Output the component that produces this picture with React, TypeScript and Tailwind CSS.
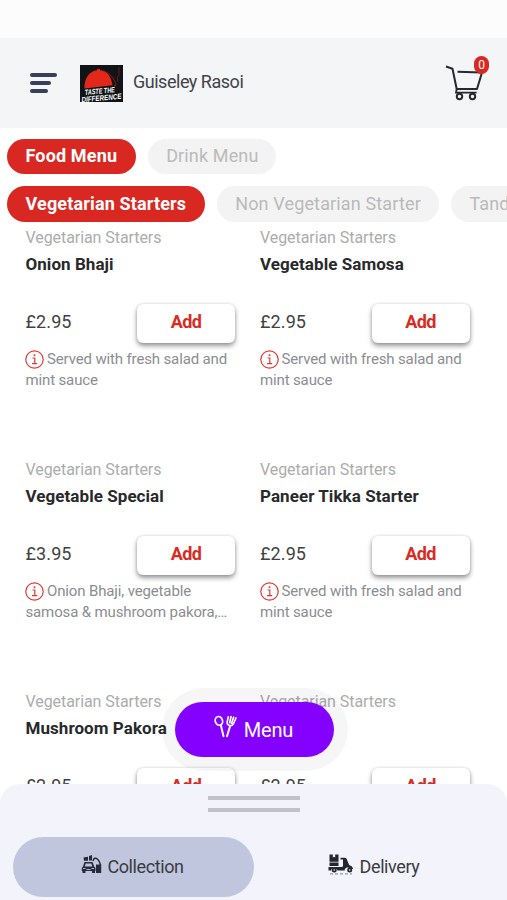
import type { ReactNode } from "react";

type MenuItem = {
  name: string;
  price: string;
  note: string;
};

const CATEGORY = "Vegetarian Starters";

const items: MenuItem[] = [
  { name: "Onion Bhaji", price: "£2.95", note: "Served with fresh salad and mint sauce" },
  { name: "Vegetable Samosa", price: "£2.95", note: "Served with fresh salad and mint sauce" },
  { name: "Vegetable Special", price: "£3.95", note: "Onion Bhaji, vegetable samosa & mushroom pakora,…" },
  { name: "Paneer Tikka Starter", price: "£2.95", note: "Served with fresh salad and mint sauce" },
  { name: "Mushroom Pakora", price: "£2.95", note: "" },
  { name: "", price: "£2.95", note: "" },
];

function RestaurantLogo() {
  return (
    <svg width="43" height="37" viewBox="0 0 43 37" className="ml-[23px] shrink-0">
      <rect width="43" height="37" fill="#111416" />
      <path d="M4.500 23.500C4 13 10 6 17 5.300c0-1.800 3-2 3.200 0C27 5.700 31.500 12 32.500 20.300Z" fill="#e3281a" />
      <path d="M23 6c7 2 12 8 13 14.500l-2 .3" fill="none" stroke="#a51e1c" strokeWidth="0.8" />
      <path d="M39 2v9M37.500 11v6" fill="none" stroke="#5c1519" strokeWidth="1.300" />
      <g
        fill="#fff"
        fontFamily="'Liberation Sans', Arial, sans-serif"
        fontWeight="700"
        fontStyle="italic"
        transform="rotate(-5 21 28)"
      >
        <text x="5" y="28.500" fontSize="7.500" textLength="30" lengthAdjust="spacingAndGlyphs">
          TASTE THE
        </text>
        <text x="1" y="35.500" fontSize="7.500" textLength="40" lengthAdjust="spacingAndGlyphs">
          DIFFERENCE
        </text>
      </g>
    </svg>
  );
}

function CartIcon() {
  return (
    <svg width="40" height="38" viewBox="0 0 40 38" fill="none" stroke="#26282d" strokeWidth="2">
      <path d="M1 2.500l6.500 2.300 4.200 20.200h20.300l5-16.500-24.500-.700" strokeLinejoin="round" />
      <path d="M11.700 25l-.7 3.700h20.500" strokeWidth="1.800" />
      <circle cx="14.500" cy="32.500" r="2.700" />
      <circle cx="27.500" cy="32.500" r="2.700" />
    </svg>
  );
}

function InfoIcon() {
  return (
    <svg
      width="19"
      height="19"
      viewBox="0 0 19 19"
      fill="none"
      stroke="#df3a35"
      className="-ml-[0.5px] mr-[3px] inline-block align-[-5px]"
    >
      <circle cx="9.500" cy="9.500" r="8.700" strokeWidth="1.200" />
      <path d="M7.500 8h2.300v5.500M7 13.700h5.200" strokeWidth="1.200" />
      <circle cx="9.500" cy="5.200" r="1" fill="#df3a35" stroke="none" />
    </svg>
  );
}

function CutleryIcon() {
  return (
    <svg
      width="23"
      height="23"
      viewBox="0 0 23 23"
      fill="none"
      stroke="#fff"
      strokeWidth="1.700"
      strokeLinecap="round"
      className="-mt-[6px]"
    >
      <ellipse cx="4.900" cy="5.900" rx="3.600" ry="4.400" transform="rotate(-20 4.900 5.900)" />
      <path d="M6.800 10l2.700 11.300M13 21.300l3.200-10.500" strokeWidth="2" />
      <path d="M14.300 1.800l-1.100 5c-.5 4.200 4.800 5.200 6.300 1.700l2.500-5.500M17 1.700l-1.300 6M19.600 2.200l-2 6" />
    </svg>
  );
}

function CollectionIcon() {
  return (
    <svg width="21" height="19" viewBox="0 0 21 19" fill="#272a38">
      <path d="M2.500 2.500l4.500-.8v4H3zM8 1l3-1v5.500H8z" />
      <path d="M15 9.500h5.200V18H15z" />
      <path d="M12 6l1-2.500c2.500-.8 5 .5 6.500 6.500" fill="none" stroke="#272a38" strokeWidth="1.500" />
      <path d="M3.500 7h8l1.700 4.500 1.300 1.500v3H.8v-3L2 11.500zM4.700 8.500L3.800 11.500h7.500l-1-3z" fillRule="evenodd" />
      <path d="M1.500 15.500h3V18h-3zM11 15.500h3V18h-3z" />
      <path d="M2 13.500h2.500M10.500 13.500H13M5.500 14.500h4" fill="none" stroke="#c0c6dd" strokeWidth="0.9" />
    </svg>
  );
}

function DeliveryIcon() {
  return (
    <svg width="26" height="21" viewBox="0 0 26 21" fill="#24262d">
      <path d="M1.500.5h3.300v3l1.200-.8 1.200.8v-3h3.300v7.200h-9zM1.500 8.500h9V12h-9z" />
      <path d="M.5 13h13l1.500-.5V5.500h-2.500V3.700h4.200c1.500 0 2 1 2.600 2.800l1.800 4.500c2.500.7 3.700 2 3.900 4h-3c-2-2.500-5-1.500-5.500 1.500H9.500C8 12.800 3.800 13 3 16.500H.5z" />
      <circle cx="6.200" cy="16" r="2.500" />
      <circle cx="21.700" cy="16" r="2.500" />
      <circle cx="6.200" cy="16" r="0.800" fill="#f2f3fb" />
      <circle cx="21.700" cy="16" r="0.800" fill="#f2f3fb" />
      <path d="M2 19.900h22" stroke="#777982" strokeWidth="0.900" strokeDasharray="3 2" />
    </svg>
  );
}

function Pill({ active, children }: { active?: boolean; children: ReactNode }) {
  return (
    <button
      className={
        active
          ? "h-[35.500px] shrink-0 whitespace-nowrap rounded-full bg-[#d92822] px-[18.500px] pb-px text-[18px] font-bold tracking-[0.150px] text-white"
          : "h-[35.500px] shrink-0 whitespace-nowrap rounded-full bg-[#f3f3f3] px-[18px] pb-px text-[18px] tracking-[0.140px] text-[#bababa]"
      }
    >
      {children}
    </button>
  );
}

function ItemCard({ name, price, note }: MenuItem) {
  return (
    <article className="h-[232px]">
      <p className="h-[26px] text-[16px] leading-[26px] tracking-[-0.070px] text-[#acacac]">{CATEGORY}</p>
      <h3 className="h-[27px] text-[17px] font-bold leading-[27px] tracking-[0.060px] text-[#28292b]">{name}</h3>
      <div className="mt-[26px] flex w-[209.500px] items-center justify-between">
        <span className="pb-[3px] text-[18px] tracking-[0.100px] text-[#414143]">{price}</span>
        <button className="h-[39px] w-[98px] rounded-[6px] bg-white pb-[3px] text-[18px] font-bold tracking-[-0.600px] text-[#d92a24] shadow-[0_3px_5px_rgba(0,0,0,0.4),0_0_3px_rgba(0,0,0,0.15)]">
          Add
        </button>
      </div>
      {note ? (
        <p className="mt-[6px] w-[210px] text-[15px] leading-[21px] tracking-[-0.140px] text-[#8c8d91]">
          <InfoIcon />
          {note}
        </p>
      ) : null}
    </article>
  );
}

export default function App() {
  return (
    <div className="relative flex h-[900px] w-[507px] flex-col overflow-hidden bg-white font-[Roboto,sans-serif]">
      <div className="h-[38px] shrink-0 bg-[#fcfcfc]" />

      <header className="flex h-[90px] shrink-0 items-center bg-[#f3f5f7] pl-[30px]">
        <div className="flex w-[27px] flex-col gap-[4.500px]">
          <span className="h-[3.500px] w-[27px] rounded-full bg-[#3a3e59]" />
          <span className="h-[3.500px] w-[21px] rounded-full bg-[#3a3e59]" />
          <span className="h-[3.500px] w-[18px] rounded-full bg-[#3a3e59]" />
        </div>
        <RestaurantLogo />
        <h1 className="ml-[10px] pb-[3px] text-[18px] tracking-[-0.480px] text-[#414347]">Guiseley Rasoi</h1>
        <div className="relative ml-auto mr-[22px]">
          <CartIcon />
          <span className="absolute -top-[8px] right-[-4px] flex h-[18px] w-[15px] items-center justify-center rounded-full bg-[#d92822] text-[12px] text-white">
            0
          </span>
        </div>
      </header>

      <main className="min-h-0 flex-1 overflow-hidden">
        <nav className="flex gap-[12.500px] pl-[7px] pt-[10.500px]">
          <Pill active>Food Menu</Pill>
          <Pill>Drink Menu</Pill>
        </nav>
        <nav className="flex gap-[12.500px] overflow-hidden pl-[7px] pt-[12px]">
          <Pill active>Vegetarian Starters</Pill>
          <Pill>Non Vegetarian Starter</Pill>
          <Pill>Tandoori Starters</Pill>
        </nav>
        <section className="grid grid-cols-[234.500px_234.500px] pl-[25.500px] pt-[3px]">
          {items.map((item, i) => (
            <ItemCard key={i} {...item} />
          ))}
        </section>
      </main>

      <footer className="flex h-[116px] shrink-0 flex-col rounded-t-[20px] bg-[#f2f3fb]">
        <div className="mx-auto mt-[12px] flex w-[92px] flex-col gap-[8px]">
          <span className="h-[4px] bg-[#c1c2c7]" />
          <span className="h-[4px] bg-[#c1c2c7]" />
        </div>
        <div className="mt-[25px] flex pl-[13px] text-[18px] tracking-[-0.400px] text-[#3a3b42]">
          <button className="flex h-[60px] w-[241px] items-center justify-center gap-[5px] rounded-full bg-[#c0c6dd] pb-[2px] pr-[2px]">
            <span className="-mt-[4px]">
              <CollectionIcon />
            </span>
            Collection
          </button>
          <button className="flex h-[60px] w-[241px] items-center justify-center gap-[6px] rounded-full pb-[2px] pr-[2px]">
            <span className="-mt-[4px]">
              <DeliveryIcon />
            </span>
            Delivery
          </button>
        </div>
      </footer>

      <button className="absolute left-[162px] top-[688px] h-[83px] w-[186px] rounded-full bg-black/[0.035] py-[14px] pl-[13px] pr-[14px]">
        <span className="flex h-full w-full items-center justify-center gap-[7px] rounded-full bg-[#8400ff] pr-[2px] text-[20px] tracking-[-0.200px] text-white">
          <CutleryIcon />
          Menu
        </span>
      </button>
    </div>
  );
}
